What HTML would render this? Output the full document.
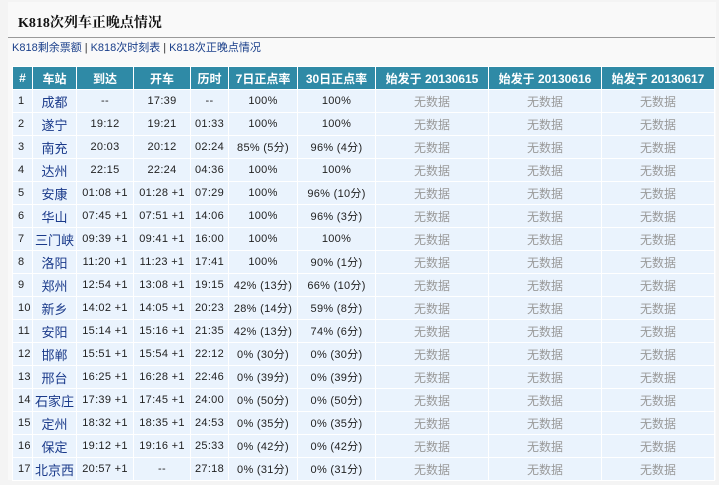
<!DOCTYPE html>
<html><head><meta charset="utf-8"><style>
body{margin:0;width:719px;height:485px;background:#f4f4f4;font-family:"Liberation Sans","Noto Sans CJK SC",sans-serif;position:relative;overflow:hidden}
.box{position:absolute;left:8px;top:2px;width:708px;height:478px;background:#f9f9f9}
h1{position:absolute;left:18px;top:12px;margin:0;font-size:14px;font-weight:bold;color:#111;font-family:"Liberation Serif","Noto Serif CJK SC",serif}
.hr{position:absolute;left:8px;top:37px;width:707px;height:1px;background:#9a9a9a}
.links{position:absolute;left:12px;top:39px;font-size:11px;color:#1a3f8a;white-space:nowrap}
.links span{color:#333;margin:0 3px}
table{position:absolute;left:12px;top:66px;width:702px;border-collapse:collapse;table-layout:fixed;font-size:12px}
td,th{height:22px;padding:0;border:1px solid #fff;text-align:center;white-space:nowrap;overflow:hidden}
th{background:#2f8aa6;color:#fff;font-weight:bold;font-size:12px}
td{background:#eaf3fd;color:#222;font-size:11px;letter-spacing:0.3px}
td.s{color:#1a3a8a;font-size:13px;letter-spacing:0}
td.n{color:#999;font-size:12px;letter-spacing:0}
td.i{text-align:left;padding-left:5px}
</style></head><body>
<div class="box"></div>
<h1>K818次列车正晚点情况</h1>
<div class="hr"></div>
<div class="links">K818剩余票额<span>|</span>K818次时刻表<span>|</span>K818次正晚点情况</div>
<table>
<colgroup><col style="width:20px"><col style="width:44px"><col style="width:57px"><col style="width:57px"><col style="width:38px"><col style="width:69px"><col style="width:78px"><col style="width:113px"><col style="width:113px"><col style="width:113px"></colgroup>
<tr><th>#</th><th>车站</th><th>到达</th><th>开车</th><th>历时</th><th>7日正点率</th><th>30日正点率</th><th>始发于 20130615</th><th>始发于 20130616</th><th>始发于 20130617</th></tr>
<tr><td class="i">1</td><td class="s">成都</td><td>--</td><td>17:39</td><td>--</td><td>100%</td><td>100%</td><td class="n">无数据</td><td class="n">无数据</td><td class="n">无数据</td></tr>
<tr><td class="i">2</td><td class="s">遂宁</td><td>19:12</td><td>19:21</td><td>01:33</td><td>100%</td><td>100%</td><td class="n">无数据</td><td class="n">无数据</td><td class="n">无数据</td></tr>
<tr><td class="i">3</td><td class="s">南充</td><td>20:03</td><td>20:12</td><td>02:24</td><td>85% (5分)</td><td>96% (4分)</td><td class="n">无数据</td><td class="n">无数据</td><td class="n">无数据</td></tr>
<tr><td class="i">4</td><td class="s">达州</td><td>22:15</td><td>22:24</td><td>04:36</td><td>100%</td><td>100%</td><td class="n">无数据</td><td class="n">无数据</td><td class="n">无数据</td></tr>
<tr><td class="i">5</td><td class="s">安康</td><td>01:08 +1</td><td>01:28 +1</td><td>07:29</td><td>100%</td><td>96% (10分)</td><td class="n">无数据</td><td class="n">无数据</td><td class="n">无数据</td></tr>
<tr><td class="i">6</td><td class="s">华山</td><td>07:45 +1</td><td>07:51 +1</td><td>14:06</td><td>100%</td><td>96% (3分)</td><td class="n">无数据</td><td class="n">无数据</td><td class="n">无数据</td></tr>
<tr><td class="i">7</td><td class="s">三门峡</td><td>09:39 +1</td><td>09:41 +1</td><td>16:00</td><td>100%</td><td>100%</td><td class="n">无数据</td><td class="n">无数据</td><td class="n">无数据</td></tr>
<tr><td class="i">8</td><td class="s">洛阳</td><td>11:20 +1</td><td>11:23 +1</td><td>17:41</td><td>100%</td><td>90% (1分)</td><td class="n">无数据</td><td class="n">无数据</td><td class="n">无数据</td></tr>
<tr><td class="i">9</td><td class="s">郑州</td><td>12:54 +1</td><td>13:08 +1</td><td>19:15</td><td>42% (13分)</td><td>66% (10分)</td><td class="n">无数据</td><td class="n">无数据</td><td class="n">无数据</td></tr>
<tr><td class="i">10</td><td class="s">新乡</td><td>14:02 +1</td><td>14:05 +1</td><td>20:23</td><td>28% (14分)</td><td>59% (8分)</td><td class="n">无数据</td><td class="n">无数据</td><td class="n">无数据</td></tr>
<tr><td class="i">11</td><td class="s">安阳</td><td>15:14 +1</td><td>15:16 +1</td><td>21:35</td><td>42% (13分)</td><td>74% (6分)</td><td class="n">无数据</td><td class="n">无数据</td><td class="n">无数据</td></tr>
<tr><td class="i">12</td><td class="s">邯郸</td><td>15:51 +1</td><td>15:54 +1</td><td>22:12</td><td>0% (30分)</td><td>0% (30分)</td><td class="n">无数据</td><td class="n">无数据</td><td class="n">无数据</td></tr>
<tr><td class="i">13</td><td class="s">邢台</td><td>16:25 +1</td><td>16:28 +1</td><td>22:46</td><td>0% (39分)</td><td>0% (39分)</td><td class="n">无数据</td><td class="n">无数据</td><td class="n">无数据</td></tr>
<tr><td class="i">14</td><td class="s">石家庄</td><td>17:39 +1</td><td>17:45 +1</td><td>24:00</td><td>0% (50分)</td><td>0% (50分)</td><td class="n">无数据</td><td class="n">无数据</td><td class="n">无数据</td></tr>
<tr><td class="i">15</td><td class="s">定州</td><td>18:32 +1</td><td>18:35 +1</td><td>24:53</td><td>0% (35分)</td><td>0% (35分)</td><td class="n">无数据</td><td class="n">无数据</td><td class="n">无数据</td></tr>
<tr><td class="i">16</td><td class="s">保定</td><td>19:12 +1</td><td>19:16 +1</td><td>25:33</td><td>0% (42分)</td><td>0% (42分)</td><td class="n">无数据</td><td class="n">无数据</td><td class="n">无数据</td></tr>
<tr><td class="i">17</td><td class="s">北京西</td><td>20:57 +1</td><td>--</td><td>27:18</td><td>0% (31分)</td><td>0% (31分)</td><td class="n">无数据</td><td class="n">无数据</td><td class="n">无数据</td></tr>
</table>
</body></html>
